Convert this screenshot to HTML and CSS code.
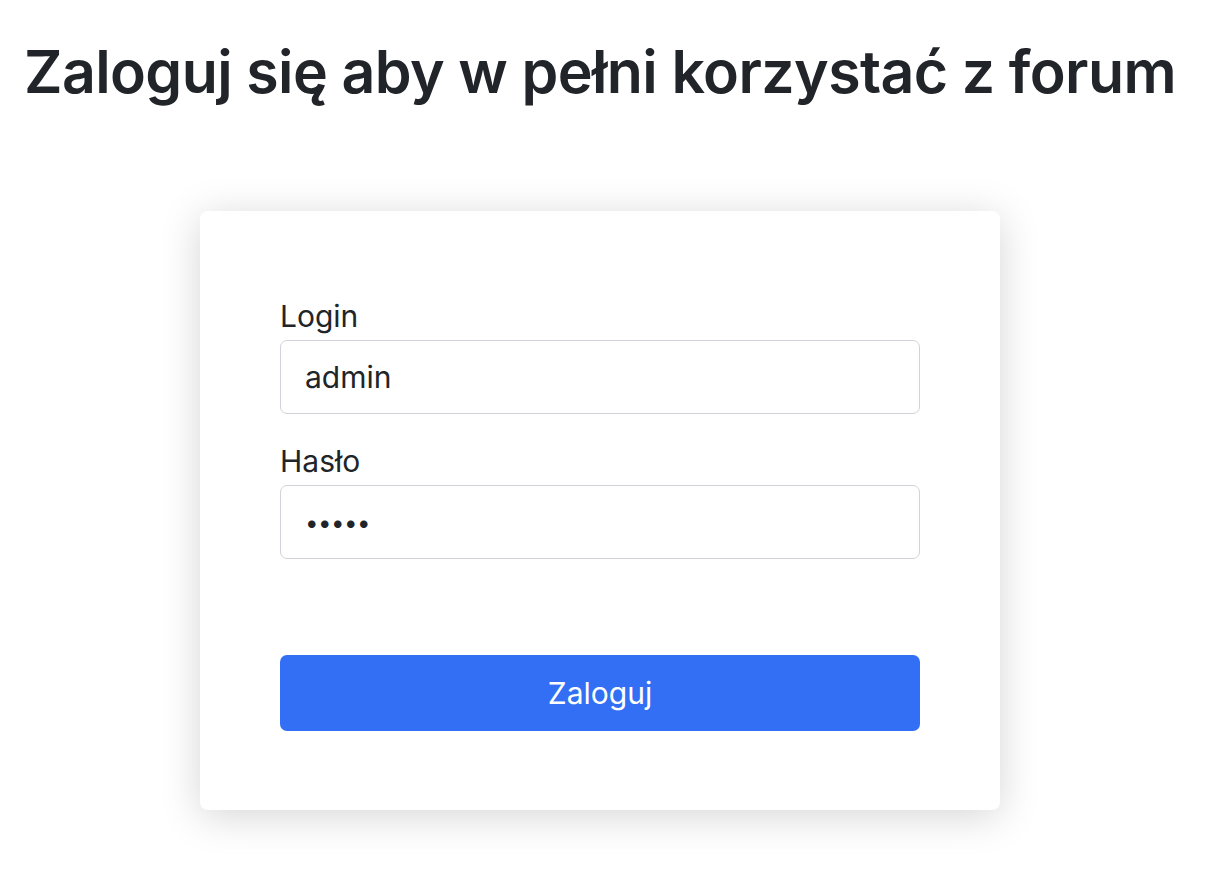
FILE: index.html
```html
<!DOCTYPE html>
<html lang="pl">
<head>
<meta charset="utf-8">
<title>Logowanie</title>
<link rel="stylesheet" href="styles.css">
</head>
<body>
<main class="page">
  <h1 class="title">Zaloguj się aby w pełni korzystać z forum</h1>
  <form class="card">
    <div class="group">
      <label class="label" for="login">Login</label>
      <input class="input" id="login" type="text" value="admin">
    </div>
    <div class="group">
      <label class="label" for="pass">Hasło</label>
      <input class="input input-pass" id="pass" type="password" value="admin">
    </div>
    <button class="btn" type="button">Zaloguj</button>
  </form>
</main>
</body>
</html>
```
FILE: styles.css
```css
* { box-sizing: border-box; }
html, body { margin: 0; padding: 0; background: #fff; }
body {
  font-family: Inter, "Noto Sans", "Liberation Sans", sans-serif;
  color: #212529;
}
.page {
  padding: 0 6px 70px 0;
}
.title {
  margin: 36px 0 0;
  font-size: 59px;
  line-height: 72px;
  font-weight: 600;
  letter-spacing: -0.6px;
  text-align: center;
  color: #212529;
}
.card {
  width: 800px;
  margin: 103px auto 0;
  background: #fff;
  border-radius: 8px;
  box-shadow: 0 6px 40px rgba(0, 0, 0, 0.17);
  padding: 83px 80px 79px;
  display: flex;
  flex-direction: column;
}
.group {
  display: flex;
  flex-direction: column;
  gap: 1px;
  margin-bottom: 25px;
}
.group + .group { margin-bottom: 96px; }
.label {
  font-size: 30px;
  line-height: 45px;
}
.input {
  width: 100%;
  height: 74px;
  padding: 0 24px;
  font-family: inherit;
  font-size: 30px;
  line-height: 45px;
  color: #212529;
  border: 1.5px solid #d0d4d9;
  border-radius: 7px;
  outline: none;
  background: #fff;
}
.input-pass {
  font-size: 24px;
  letter-spacing: -0.5px;
}
.btn {
  height: 76px;
  border: none;
  border-radius: 7px;
  background: #336ff5;
  color: #fff;
  font-family: inherit;
  font-size: 30px;
  line-height: 45px;
}
```
